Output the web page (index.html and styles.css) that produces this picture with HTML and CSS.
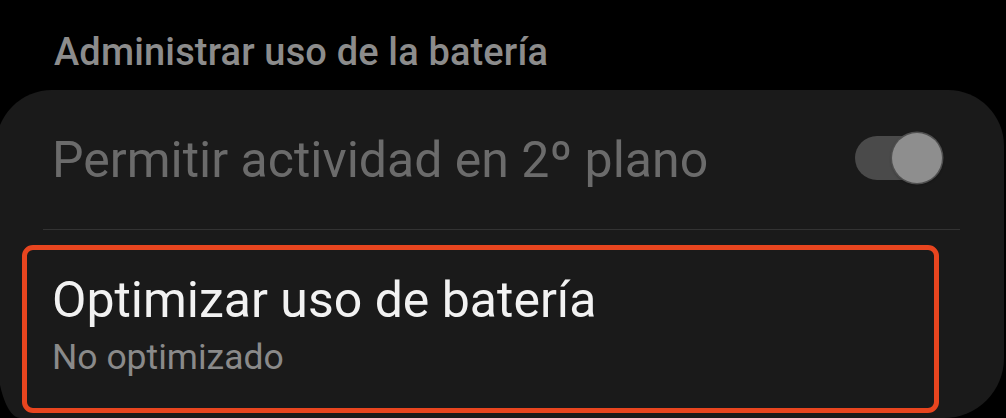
FILE: index.html
```html
<!DOCTYPE html>
<html lang="es">
<head>
    <meta charset="UTF-8">
    <meta name="viewport" content="width=device-width, initial-scale=1.0">
    <title>Batería</title>
    <link rel="stylesheet" href="styles.css">
</head>
<body>
    <h2 class="section-title">Administrar uso de la batería</h2>

    <div class="card">
        <div class="setting-row disabled">
            <span class="setting-label">Permitir actividad en 2º plano</span>
            <div class="switch">
                <div class="switch-thumb"></div>
            </div>
        </div>

        <div class="divider"></div>

        <div class="setting-item highlighted">
            <div class="setting-label">Optimizar uso de batería</div>
            <div class="setting-summary">No optimizado</div>
        </div>
    </div>
</body>
</html>
```

FILE: styles.css
```css
body {
    margin: 0;
    background: #000;
    font-family: Roboto, "Noto Sans", sans-serif;
    overflow: hidden;
    height: 418px;
}

.section-title {
    margin: 0;
    padding: 29px 0 14px 54px;
    font-size: 38px;
    line-height: 47px;
    font-weight: 500;
    letter-spacing: 0.15px;
    color: #8c8c8c;
}

.card {
    background: #1a1a1a;
    margin: 0 2px 0 -4px;
    height: 328px;
    border-radius: 56px 56px 60px 24px / 56px 56px 60px 74px;
}

.setting-row {
    display: flex;
    align-items: center;
    justify-content: space-between;
    padding: 40px 65px 39px 56px;
}

.setting-label {
    font-size: 50px;
    line-height: 60px;
    color: #f2f2f2;
}

.disabled .setting-label {
    color: #6b6b6b;
}

.switch {
    position: relative;
    width: 84px;
    height: 44px;
    border-radius: 22px;
    background: #4a4a4a;
    margin-top: -4px;
}

.switch-thumb {
    position: absolute;
    right: -3px;
    top: -3px;
    width: 50px;
    height: 50px;
    border-radius: 50%;
    background: #8e8e8e;
    box-shadow: 0 0 0 1.5px #4f4f4f, 0 1px 3px rgba(0, 0, 0, 0.6);
}

.divider {
    height: 1px;
    background: #333;
    margin: 0 44px 0 47px;
}

.setting-item {
    margin: 15px 65px 0 26px;
    padding: 20px 20px 29px 25px;
}

.highlighted {
    border: 5px solid #e8451f;
    border-radius: 11px;
}

.setting-summary {
    margin-top: 5px;
    font-size: 35.5px;
    line-height: 44px;
    color: #8a8a8a;
}
```
